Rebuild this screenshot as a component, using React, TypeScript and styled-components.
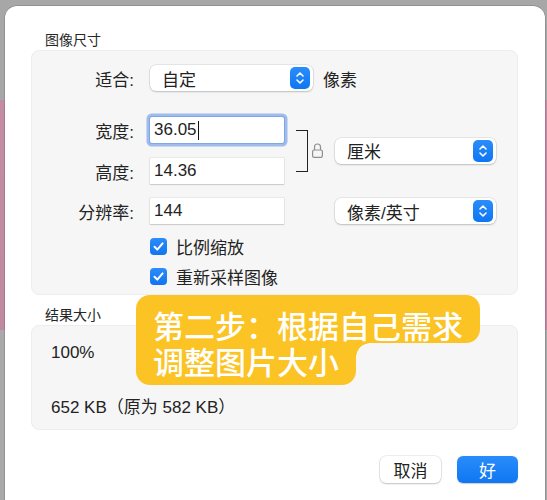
import styled, { createGlobalStyle } from "styled-components";

const GlobalStyle = createGlobalStyle`
  html, body {
    margin: 0;
    padding: 0;
  }
  body {
    font-family: "Liberation Sans", "Noto Sans CJK SC", sans-serif;
    color: #232323;
    background: linear-gradient(
      to bottom,
      #a7a7a7 0px,
      #a7a7a7 100px,
      #c38ca2 100px,
      #bf8aa0 330px,
      #a9a9a9 330px
    );
  }
`;

const Page = styled.div`
  height: 500px;
  overflow: hidden;
  padding: 6px 2px 0 5px;
  box-sizing: border-box;
`;

const Dialog = styled.div`
  position: relative;
  height: 520px;
  background: #ffffff;
  border-radius: 12px 12px 0 0;
  box-shadow: 0 0 0 0.5px rgba(0, 0, 0, 0.25);
  padding: 26px 27px 0 26px;
  box-sizing: border-box;
`;

const SectionTitle = styled.div<{ $top?: number }>`
  font-size: 14px;
  line-height: 16px;
  padding-left: 14px;
  margin-top: ${(p) => p.$top ?? 0}px;
  margin-bottom: 2px;
  color: #262626;
`;

const Panel = styled.div`
  background: #f6f6f6;
  border: 1px solid #ededed;
  border-radius: 8px;
  padding: 14px 0 7px 0;
`;

const Row = styled.div<{ $top?: number }>`
  display: flex;
  align-items: center;
  height: 26px;
  margin-top: ${(p) => p.$top ?? 0}px;
`;

const Label = styled.div`
  width: 102px;
  margin-right: 16px;
  text-align: right;
  font-size: 17px;
  flex-shrink: 0;
`;

const SelectBox = styled.div<{ $width: number; $left?: number }>`
  position: relative;
  display: flex;
  align-items: center;
  width: ${(p) => p.$width}px;
  height: 26px;
  margin-left: ${(p) => p.$left ?? 0}px;
  padding-left: 12px;
  box-sizing: border-box;
  background: #ffffff;
  border-radius: 6px;
  box-shadow: 0 0 0 0.5px rgba(0, 0, 0, 0.12), 0 1px 2px rgba(0, 0, 0, 0.18);
  font-size: 17px;
  flex-shrink: 0;
`;

const Stepper = styled.span`
  position: absolute;
  right: 3px;
  top: 2px;
  width: 20px;
  height: 22px;
  border-radius: 5px;
  background: linear-gradient(#2a8dfb, #0d76f2);
  display: flex;
  align-items: center;
  justify-content: center;
`;

const Unit = styled.span`
  margin-left: 10px;
  font-size: 17px;
`;

const Input = styled.div<{ $focus?: boolean }>`
  width: 134px;
  height: 26px;
  box-sizing: border-box;
  padding-left: 4px;
  display: flex;
  align-items: center;
  background: #ffffff;
  font-size: 17px;
  flex-shrink: 0;
  box-shadow: ${(p) =>
    p.$focus
      ? "0 0 0 1px #7fa6e6, 0 0 0 3.5px rgba(88, 140, 230, 0.55)"
      : "0 0 0 0.5px rgba(0, 0, 0, 0.1), 0 1px 1px rgba(0, 0, 0, 0.12)"};
  border-radius: ${(p) => (p.$focus ? "2px" : "0")};
`;

const Caret = styled.span`
  display: inline-block;
  width: 1px;
  height: 19px;
  background: #111;
  margin-left: 1px;
`;

const LinkGroup = styled.div`
  display: flex;
  align-items: center;
  margin-top: 26px;
`;

const FieldColumn = styled.div`
  display: flex;
  flex-direction: column;
  gap: 15px;
`;

const Bracket = styled.div`
  width: 11px;
  height: 40px;
  margin-left: 12px;
  border: 1.5px solid #222;
  border-left: none;
`;

const LockIcon = styled.svg`
  margin-left: 3px;
  width: 13px;
  height: 17px;
`;

const CheckRow = styled.label<{ $top: number }>`
  display: flex;
  align-items: center;
  gap: 9px;
  height: 22px;
  margin-left: 118px;
  margin-top: ${(p) => p.$top}px;
  font-size: 17px;
`;

const CheckBox = styled.span`
  width: 17px;
  height: 17px;
  border-radius: 4px;
  background: linear-gradient(#2b8cfa, #1275ef);
  display: flex;
  align-items: center;
  justify-content: center;
`;

const ResultPanel = styled(Panel)`
  height: 105px;
  box-sizing: border-box;
  padding: 17px 19px 0;
  display: flex;
  flex-direction: column;
  gap: 35px;
  font-size: 17px;
  line-height: 20px;
`;

const Buttons = styled.div`
  display: flex;
  justify-content: flex-end;
  gap: 16px;
  margin-top: 26px;
`;

const Button = styled.button<{ $primary?: boolean }>`
  width: 61px;
  height: 27px;
  border: none;
  border-radius: 6px;
  font-family: inherit;
  font-size: 17px;
  color: ${(p) => (p.$primary ? "#ffffff" : "#222")};
  background: ${(p) =>
    p.$primary ? "linear-gradient(#2a8cfb, #0f77f3)" : "#ffffff"};
  box-shadow: ${(p) =>
    p.$primary
      ? "0 0.5px 1px rgba(0, 0, 0, 0.2)"
      : "0 0 0 0.5px rgba(0, 0, 0, 0.12), 0 1px 2px rgba(0, 0, 0, 0.2)"};
  padding: 0;
`;

const Callout = styled.div`
  position: absolute;
  left: 131px;
  top: 289px;
  color: #ffffff;
  font-family: "Noto Sans CJK SC", sans-serif;
  font-size: 31px;
  font-weight: 500;
  display: flex;
  flex-direction: column;
  align-items: flex-start;
`;

const CalloutLine = styled.div<{ $last?: boolean }>`
  position: relative;
  background: #fbc324;
  line-height: 36px;
  padding: ${(p) => (p.$last ? "0 17px 6px" : "12px 17px 0")};
  border-radius: ${(p) => (p.$last ? "0 0 14px 14px" : "14px 14px 14px 0")};
  white-space: nowrap;

  ${(p) =>
    p.$last &&
    `
    &::after {
      content: "";
      position: absolute;
      top: 0;
      right: -14px;
      width: 14px;
      height: 14px;
      background: radial-gradient(circle at 100% 100%, transparent 13.5px, #fbc324 14px);
    }
  `}
`;

function StepperIcon() {
  return (
    <Stepper>
      <svg width="12" height="16" viewBox="0 0 12 16" fill="none">
        <path d="M3 6 L6 3 L9 6" stroke="#fff" strokeWidth="1.6" strokeLinecap="round" strokeLinejoin="round" />
        <path d="M3 10 L6 13 L9 10" stroke="#fff" strokeWidth="1.6" strokeLinecap="round" strokeLinejoin="round" />
      </svg>
    </Stepper>
  );
}

function Check({ text, top }: { text: string; top: number }) {
  return (
    <CheckRow $top={top}>
      <CheckBox>
        <svg width="13" height="13" viewBox="0 0 13 13" fill="none">
          <path d="M2.5 6.8 L5.3 9.6 L10.6 3.4" stroke="#fff" strokeWidth="2" strokeLinecap="round" strokeLinejoin="round" />
        </svg>
      </CheckBox>
      {text}
    </CheckRow>
  );
}

export default function App() {
  return (
    <Page>
      <GlobalStyle />
      <Dialog>
        <SectionTitle>图像尺寸</SectionTitle>
        <Panel>
          <Row>
            <Label>适合:</Label>
            <SelectBox $width={163}>
              自定
              <StepperIcon />
            </SelectBox>
            <Unit>像素</Unit>
          </Row>

          <LinkGroup>
            <FieldColumn>
              <Row>
                <Label>宽度:</Label>
                <Input $focus>
                  36.05
                  <Caret />
                </Input>
              </Row>
              <Row>
                <Label>高度:</Label>
                <Input>14.36</Input>
              </Row>
            </FieldColumn>
            <Bracket />
            <LockIcon viewBox="0 0 13 17" fill="none">
              <path d="M3.5 8 V5 a3 3 0 0 1 6 0 V8" stroke="#8f8f8f" strokeWidth="1.2" />
              <rect x="1.6" y="8" width="9.8" height="7.4" rx="1.6" stroke="#8f8f8f" strokeWidth="1.2" />
            </LockIcon>
            <SelectBox $width={161} $left={11}>
              厘米
              <StepperIcon />
            </SelectBox>
          </LinkGroup>

          <Row $top={14}>
            <Label>分辨率:</Label>
            <Input>144</Input>
            <SelectBox $width={161} $left={51}>
              像素/英寸
              <StepperIcon />
            </SelectBox>
          </Row>

          <Check text="比例缩放" top={11} />
          <Check text="重新采样图像" top={8} />
        </Panel>

        <SectionTitle $top={12}>结果大小</SectionTitle>
        <ResultPanel>
          <div>100%</div>
          <div>652 KB（原为 582 KB）</div>
        </ResultPanel>

        <Buttons>
          <Button>取消</Button>
          <Button $primary>好</Button>
        </Buttons>

        <Callout>
          <CalloutLine>第二步：根据自己需求</CalloutLine>
          <CalloutLine $last>调整图片大小</CalloutLine>
        </Callout>
      </Dialog>
    </Page>
  );
}
